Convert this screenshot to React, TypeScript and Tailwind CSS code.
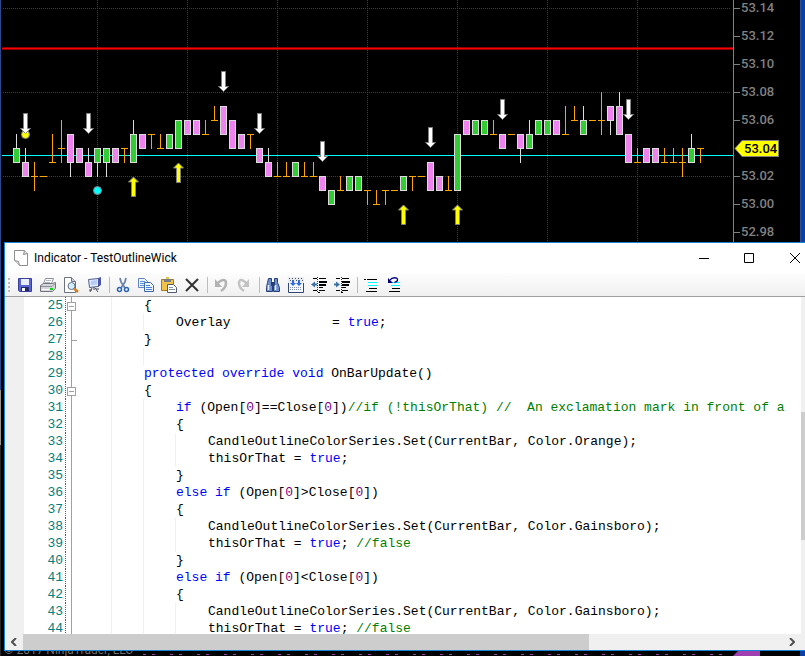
import type { ReactNode } from "react";

type Bar = { kind: "up" | "down" | "flat"; top: number; bottom: number; high?: number; low?: number };

const up = (top: number, bottom: number, high?: number, low?: number): Bar => ({ kind: "up", top, bottom, high, low });
const down = (top: number, bottom: number, high?: number, low?: number): Bar => ({ kind: "down", top, bottom, high, low });
const flat = (at: number, high?: number, low?: number): Bar => ({ kind: "flat", top: at, bottom: at, high, low });

// prices are in ticks above 53.00
const bars: Bar[] = [
  up(4, 3, 5), down(3, 2, 4), flat(2, 3, 1), flat(2), flat(3, 5), flat(4, 6, 3),
  down(5, 3, 5, 2), down(4, 3), down(3, 2, 4), up(4, 3, 4, 2), up(4, 3, 4, 2), down(4, 3),
  flat(4, 4, 3), up(5, 3, 6), down(5, 4), flat(5, 5, 4), flat(4, 5), up(5, 4),
  up(6, 4), down(6, 5), down(6, 5), flat(5, 6), flat(6, 7), down(7, 5),
  down(6, 4), down(5, 4), flat(5, 5, 4), down(4, 3), down(3, 2, 4), flat(2, 3),
  flat(2, 3), up(3, 2), flat(2, 3), flat(2, 3), down(2, 1), up(1, 0),
  flat(1, 2), up(2, 1), up(2, 1), flat(1, 1, 0), flat(0, 1), flat(1, 1, 0),
  flat(1), up(2, 1), flat(2, 2, 1), flat(2), down(3, 1), down(2, 1),
  flat(1, 2), up(5, 1), down(6, 5), up(6, 5), up(6, 5), flat(5, 6),
  down(5, 4), flat(5), down(5, 4, 5, 3), up(5, 4, 6), up(6, 5), up(6, 5),
  down(6, 5), flat(5, 7), flat(6, 7), up(6, 5, 7), flat(6), flat(6, 8, 5),
  down(7, 6, 7, 5), down(7, 5, 8), down(5, 3), flat(3, 4), down(4, 3), down(4, 3),
  flat(3, 4), flat(3, 4), flat(3, 4, 2), up(4, 3, 5), flat(4, 4, 3),
];

const sells = [[25, 113], [88, 113], [223, 71], [259, 113], [322, 141], [430, 127], [502, 99], [628, 99]];
const buys = [[133, 177], [178, 163], [403, 205], [457, 205]];
const prices = ["53.14", "53.12", "53.10", "53.08", "53.06", "53.04", "53.02", "53.00", "52.98"];

const y = (tick: number) => 204 - tick * 14;

function Candle({ bar, x }: { bar: Bar; x: number }) {
  const high = y(bar.high ?? bar.top);
  const low = y(bar.low ?? bar.bottom);
  if (bar.kind === "flat") {
    return (
      <g fill="#ffa500">
        <rect x={x - 3} y={y(bar.top)} width="7" height="1" />
        {high !== low && <rect x={x} y={high} width="1" height={low - high + 1} />}
      </g>
    );
  }
  return (
    <g>
      <rect x={x} y={high} width="1" height={low - high + 1} fill="#dcdcdc" />
      <rect x={x - 3} y={y(bar.top)} width="7" height={y(bar.bottom) - y(bar.top) + 1} fill="#dcdcdc" />
      <rect x={x - 2} y={y(bar.top) + 1} width="5" height={y(bar.bottom) - y(bar.top) - 1} fill={bar.kind === "up" ? "#32cd32" : "#ee82ee"} />
    </g>
  );
}

function Plot() {
  return (
    <svg className="h-full min-w-0 flex-1" shapeRendering="crispEdges" role="img" aria-label="Price chart">
      <g transform="translate(-2 0)">
        <g stroke="#45450f" strokeDasharray="1 1">
          {[8, 92, 176].map((row) => <line key={row} x1="3" x2="100%" y1={row + 0.5} y2={row + 0.5} />)}
          {[97, 187, 277, 367, 457, 547, 637].map((col) => <line key={col} x1={col + 0.5} x2={col + 0.5} y1="0" y2="100%" />)}
        </g>
        <rect x="0" y="47" width="110%" height="3" fill="#900000" />
        <rect x="0" y="48" width="110%" height="1" fill="#ff0000" />
        <rect x="0" y="155" width="110%" height="1" fill="#00ffff" />
        {bars.map((bar, i) => <Candle key={i} bar={bar} x={16 + i * 9} />)}
        <g shapeRendering="auto" stroke="#808080">
          <circle cx="25.5" cy="134.5" r="4" fill="#ffff00" />
          <circle cx="97.5" cy="190.5" r="4" fill="#00ffff" />
          {sells.map(([x, top]) => (
            <path key={x} d={`M${x - 1.5} ${top + 0.5}h4v15h3l-5 5l-5-5h3z`} fill="#ffffff" />
          ))}
          {buys.map(([x, top]) => (
            <path key={x} d={`M${x + 0.5} ${top}l5 5h-3v14.5h-4v-14.5h-3z`} fill="#ffff00" />
          ))}
        </g>
      </g>
    </svg>
  );
}

function PriceAxis() {
  return (
    <div className="w-[67px] shrink-0 border-l border-[#808080] font-['Roboto',sans-serif] text-[13px] font-medium text-[#808080]">
      <div className="-mt-1.5">
        {prices.map((price) =>
          price === "53.04" ? (
            <div key={price} className="flex h-7 items-center">
              <svg width="10" height="17" className="shrink-0">
                <path d="M10 .5H8L1 8.5l7 8h2z" fill="#ffff00" />
                <path d="M10 .5H8L1 8.5l7 8h2" fill="none" stroke="#808080" />
              </svg>
              <span className="h-[17px] w-[35px] border-y border-r border-[#808080] bg-[#ffff00] leading-[15px] text-black">{price}</span>
            </div>
          ) : (
            <div key={price} className="flex h-7 items-center gap-px">
              <span className="h-px w-1.5 bg-[#808080]" />
              <span>{price}</span>
            </div>
          )
        )}
      </div>
    </div>
  );
}

function Tool({ label, children }: { label: string; children: ReactNode }) {
  return (
    <button aria-label={label} className="flex h-6 w-[23px] items-center justify-center">
      <svg width="16" height="16" viewBox="0 0 16 16">{children}</svg>
    </button>
  );
}

const Separator = () => <span className="flex w-1.5 justify-end pr-px"><span className="h-4 w-px bg-[#bdbdbd]" /></span>;

function Toolbar() {
  return (
    <div className="flex h-6 items-center border-b border-[#a0a0a0] bg-linear-to-b from-[#fdfdfd] to-[#f0f0f0] pl-[3px]">
      <svg width="5" height="16" className="shrink-0">
        <path d="M0 1h2v2H0zM0 5h2v2H0zM0 9h2v2H0zM0 13h2v2H0z" fill="#bcbcbc" />
      </svg>
      <Tool label="Save">
        <path d="M1.500 1.500h13v13h-12l-1-1z" fill="#5a66d0" stroke="#3a3f9c" />
        <path d="M4 2h8v6H4z" fill="#e8eefc" />
        <path d="M4 10h8v4H4z" fill="#23276b" />
        <path d="M5 11h3v3H5z" fill="#ffffff" />
      </Tool>
      <Tool label="Print">
        <path d="M5.500 1.500h8l-2 5h-8z" fill="#ffffff" stroke="#8b8f99" />
        <path d="M6 3.500h5M5 5.500h5" stroke="#b0b5c4" />
        <path d="M.5 8.500l3-2h9l3-1v6l-3 3H.5z" fill="#d4d6dc" stroke="#70747e" />
        <path d="M1 9.500h11l3-3" fill="none" stroke="#8b8f99" />
        <path d="M2 12.500h8" stroke="#ffffff" />
        <path d="M10 11h3v2h-3z" fill="#18d018" />
      </Tool>
      <Tool label="Print preview">
        <path d="M1.500 .5h7l4 4v11h-11z" fill="#ffffff" stroke="#6b7280" />
        <path d="M8.500 .5v4h4" fill="#c9d3e6" stroke="#6b7280" />
        <circle cx="8.500" cy="9" r="3.500" fill="#d2efff" stroke="#657085" />
        <path d="M11 11.500l4 3.500" stroke="#d08020" strokeWidth="2.500" />
      </Tool>
      <Tool label="Page setup">
        <path d="M2.500 2.500l10-1v8l-9 1z" fill="#dce8ff" stroke="#56618b" />
        <path d="M5 4l6-1v4l-6 1z" fill="#b5caf5" />
        <path d="M12 1l3-1v8l-3 2z" fill="#4b57a5" />
        <path d="M8 10v3M6 11l-2 4M9 11l3 4M3 13h3M10 12h3" stroke="#454b60" />
      </Tool>
      <Separator />
      <Tool label="Cut">
        <path d="M5 1l1 4 4 6M11 1l-1 4-4 6" fill="none" stroke="#6b84a8" strokeWidth="1.800" />
        <circle cx="4.500" cy="12.500" r="2" fill="none" stroke="#2b63b8" strokeWidth="1.500" />
        <circle cx="11.500" cy="12.500" r="2" fill="none" stroke="#2b63b8" strokeWidth="1.500" />
      </Tool>
      <Tool label="Copy">
        <path d="M.5 1.500h6l3 3v6h-9z" fill="#eef5ff" stroke="#5f83be" />
        <path d="M2 4.500h5M2 6.500h4M2 8.500h4" stroke="#5f91d8" />
        <path d="M6.500 5.500h6l3 3v6h-9z" fill="#eef5ff" stroke="#3d66ad" />
        <path d="M8 8.500h4M8 10.500h6M8 12.500h6" stroke="#4c82d5" />
      </Tool>
      <Tool label="Paste">
        <path d="M.5 2.500h12v11H.5z" fill="#efc34c" stroke="#a77724" />
        <path d="M3 2h7v3H3z" fill="#777b85" />
        <path d="M5 0h3v2H5z" fill="#e5c54a" />
        <path d="M6.500 7.500h6l3 3v5h-9z" fill="#ffffff" stroke="#555a68" />
        <path d="M8 10.500h4M8 12.500h6" stroke="#8090aa" />
      </Tool>
      <Tool label="Delete">
        <path d="M2 2l12 12M14 2L2 14" fill="none" stroke="#333333" strokeWidth="2" />
      </Tool>
      <Separator />
      <Tool label="Undo">
        <path d="M4 7c4-5 9-5 9-1 0 3-2 6-5 8" fill="none" stroke="#b2b2b2" strokeWidth="2.500" />
        <path d="M2 2v8h7z" fill="#b2b2b2" />
      </Tool>
      <Tool label="Redo">
        <path d="M11 7C7 2 3 2 3 6c0 3 2 6 5 8" fill="none" stroke="#c3c3c3" strokeWidth="2.500" />
        <path d="M13 2v8H6z" fill="#c3c3c3" />
      </Tool>
      <Separator />
      <Tool label="Find">
        <path d="M3.500 1.500h3v3l1 2v8h-6v-4l1-5zM9.500 1.500h3v4l2 5v4h-6v-8l1-2z" fill="#6f8fcc" stroke="#263f78" />
        <path d="M6 5h4v4H6z" fill="#263f78" />
        <path d="M3.500 8v5M10.500 8v5" stroke="#e4edff" strokeWidth="1.500" />
      </Tool>
      <Tool label="Bookmark">
        <path d="M0 0h16v16H0z" fill="#e9ebf0" />
        <path d="M1 1.500h14M2 3.500h13" stroke="#555555" strokeDasharray="1 2" />
        <path d="M.5 6v9.500h15V6" fill="#f5f8ff" stroke="#33457b" />
        <path d="M5 3v4M11 3v4" stroke="#2f6be0" strokeWidth="2" />
        <path d="M2 6h6l-3 3zM8 6h6l-3 3z" fill="#2f6be0" />
        <path d="M2 10.500h12M2 12.500h12" stroke="#8391b5" strokeDasharray="1 1" />
      </Tool>
      <Tool label="Outdent">
        <g fill="#000000" shapeRendering="crispEdges">
          <path d="M2 1h4v1H2zM8 1h7v1H8zM8 4h8v2H8zM8 7h7v2H8zM8 10h4v1H8zM2 13h4v1H2zM8 13h6v1H8zM7 15h2v1H7z" />
          <path d="M6.500 0v16" stroke="#333333" strokeDasharray="1 1" />
        </g>
        <path d="M0 7.500l4-3v2h2v2H4v2z" fill="#3e73a8" />
      </Tool>
      <Tool label="Indent">
        <g fill="#000000" shapeRendering="crispEdges">
          <path d="M2 1h4v1H2zM8 1h7v1H8zM8 4h8v2H8zM8 7h7v2H8zM8 10h4v1H8zM2 13h4v1H2zM8 13h6v1H8zM7 15h2v1H7z" />
          <path d="M7.500 0v16" stroke="#333333" strokeDasharray="1 1" />
        </g>
        <path d="M6 7.500l-4-3v2H0v2h2v2z" fill="#3e73a8" />
      </Tool>
      <Separator />
      <Tool label="Comment lines">
        <g shapeRendering="crispEdges">
          <path d="M1 2h2v1H1zM4 2h10v1H4zM6 11h8v1H6zM3 14h11v1H3z" fill="#000000" />
          <path d="M5 5h9v1H5zM5 8h9v1H5z" fill="#00ffff" />
        </g>
      </Tool>
      <Tool label="Uncomment lines">
        <g shapeRendering="crispEdges">
          <path d="M6 11h8v1H6zM3 14h11v1H3z" fill="#000000" />
          <path d="M5 5h9v1H5zM5 8h9v1H5z" fill="#00ffff" />
        </g>
        <path d="M4 3c2-3 8-3 7.500 0 0 1.500-1 2-3 2.500" fill="none" stroke="#000080" strokeWidth="1.300" />
        <path d="M2 1v5h5z" fill="#000080" />
      </Tool>
    </div>
  );
}

const K = ({ children }: { children: ReactNode }) => <span className="text-[#0000ff]">{children}</span>;
const N = ({ children }: { children: ReactNode }) => <span className="text-[#800080]">{children}</span>;
const C = ({ children }: { children: ReactNode }) => <span className="text-[#008000]">{children}</span>;

// depth is the number of tab stops, guides the number of indent rules drawn
type Line = { depth: number; guides: number; fold?: "open" | "end"; code?: ReactNode };

const lines: Line[] = [
  { depth: 2, guides: 1, fold: "open", code: "{" },
  { depth: 3, guides: 2, code: <>{"Overlay             = "}<K>true</K>;</> },
  { depth: 2, guides: 1, fold: "end", code: "}" },
  { depth: 2, guides: 2 },
  { depth: 2, guides: 1, code: <><K>protected override void</K> OnBarUpdate()</> },
  { depth: 2, guides: 1, fold: "open", code: "{" },
  { depth: 3, guides: 2, code: <><K>if</K> (Open[<N>0</N>]==Close[<N>0</N>])<C>{"//if (!thisOrThat) //  An exclamation mark in front of a"}</C></> },
  { depth: 3, guides: 2, code: "{" },
  { depth: 4, guides: 3, code: "CandleOutlineColorSeries.Set(CurrentBar, Color.Orange);" },
  { depth: 4, guides: 3, code: <>thisOrThat = <K>true</K>;</> },
  { depth: 3, guides: 2, code: "}" },
  { depth: 3, guides: 2, code: <><K>else if</K> (Open[<N>0</N>]&gt;Close[<N>0</N>])</> },
  { depth: 3, guides: 2, code: "{" },
  { depth: 4, guides: 3, code: "CandleOutlineColorSeries.Set(CurrentBar, Color.Gainsboro);" },
  { depth: 4, guides: 3, code: <>thisOrThat = <K>true</K>; <C>//false</C></> },
  { depth: 3, guides: 2, code: "}" },
  { depth: 3, guides: 2, code: <><K>else if</K> (Open[<N>0</N>]&lt;Close[<N>0</N>])</> },
  { depth: 3, guides: 2, code: "{" },
  { depth: 4, guides: 3, code: "CandleOutlineColorSeries.Set(CurrentBar, Color.Gainsboro);" },
  { depth: 4, guides: 3, code: <>thisOrThat = <K>true</K>; <C>//false</C></> },
];

function CodeLine({ line, number }: { line: Line; number: number }) {
  return (
    <div className="flex h-[17px] whitespace-pre">
      <span className="w-[42px] shrink-0 border-r border-dotted border-[#008080] pr-0.5 text-right text-[#008080]">{number}</span>
      <svg width="14" height="17" className="shrink-0" shapeRendering="crispEdges">
        <path d="M5.500 0v17" stroke="#a0a0a0" />
        {line.fold === "open" && <path d="M1.500 5.500h8v8h-8zM3 9.500h5" fill="#ffffff" stroke="#a0a0a0" />}
        {line.fold === "end" && <path d="M5 9.500h6" stroke="#a0a0a0" />}
      </svg>
      {Array.from({ length: line.depth }, (_, i) => (
        <span key={i} className={`w-8 shrink-0 border-r ${i < line.guides ? "border-[#f0f0f0]" : "border-transparent"}`} />
      ))}
      <code className="font-['Liberation_Mono',monospace]">{line.code}</code>
    </div>
  );
}

function Editor() {
  return (
    <section className="flex min-h-0 flex-1 flex-col border-y border-l border-[#1883d7] bg-white">
      <header className="flex h-[30px] shrink-0 items-center pl-[9px]">
        <svg width="15" height="16" className="mr-[5px] shrink-0">
          <path d="M.5 .5h10l3 3v12h-8l-5-5z" fill="#ffffff" stroke="#8c8c8c" />
          <path d="M10.500 .5l-1 4 4-1M.5 10.500l4 1 1 4" fill="#e4e4e4" stroke="#8c8c8c" />
        </svg>
        <h1 className="font-['Roboto',sans-serif] text-[12px] text-black">Indicator - TestOutlineWick</h1>
        <div className="ml-auto flex">
          <button aria-label="Minimize" className="flex h-7 w-11 items-center justify-center">
            <svg width="10" height="10"><path d="M0 5.500h10" stroke="#000000" /></svg>
          </button>
          <button aria-label="Maximize" className="flex h-7 w-[46px] items-center justify-center">
            <svg width="10" height="10"><path d="M.5 .5h9v9h-9z" fill="none" stroke="#000000" /></svg>
          </button>
          <button aria-label="Close" className="flex h-7 w-[33px] items-center justify-end pr-[5px]">
            <svg width="10" height="10"><path d="M0 0l10 10M10 0L0 10" stroke="#000000" /></svg>
          </button>
        </div>
      </header>
      <Toolbar />
      <div className="flex min-h-0 flex-1">
        <div className="w-[19px] shrink-0 bg-[#f0f0f0]" />
        <div className="min-w-0 flex-1 overflow-hidden font-['Liberation_Mono',monospace] text-[13px] leading-[17px] text-black">
          {lines.map((line, i) => <CodeLine key={i} line={line} number={25 + i} />)}
        </div>
        <div className="flex w-1 shrink-0 flex-col bg-[#f0f0f0] pt-[115px]">
          <div className="h-32 bg-[#cdcdcd]" />
        </div>
      </div>
      <div className="flex h-4 shrink-0 bg-[#f0f0f0]">
        <button aria-label="Scroll left" className="flex w-[18px] items-center justify-center">
          <svg width="6" height="8"><path d="M5 0L1 4l4 4" fill="none" stroke="#505050" strokeWidth="2" /></svg>
        </button>
        <div className="flex-1">
          <div className="h-full w-3/4 bg-[#cdcdcd]" />
        </div>
        <button aria-label="Scroll right" className="flex w-[27px] items-center justify-center">
          <svg width="6" height="8"><path d="M1 0l4 4-4 4" fill="none" stroke="#505050" strokeWidth="2" /></svg>
        </button>
      </div>
    </section>
  );
}

export default function App() {
  return (
    <div className="flex h-screen overflow-hidden bg-black">
      <div className="flex w-px shrink-0 flex-col">
        <div className="h-[390px] bg-[#284a8c]" />
        <div className="h-[55px] bg-[#9a968c]" />
        <div className="flex-1 bg-[#262626]" />
      </div>
      <main className="flex min-w-0 flex-1 flex-col pl-px">
        <div className="flex h-[242px] shrink-0 overflow-hidden">
          <Plot />
          <PriceAxis />
          <div className="w-[5px] border-l border-[#28509c] bg-[#0840a8]" />
        </div>
        <div className="flex min-h-0 flex-1 pl-0.5">
          <Editor />
        </div>
        <footer className="flex h-[5px] shrink-0 items-end overflow-hidden pl-0.5 font-['Roboto',sans-serif] text-[12px] leading-3 text-[#707070]">
          <span>© 2017 NinjaTrader, LLC</span>
          <svg height="5" className="min-w-0 flex-1">
            <path d="M10 3.500h590" stroke="#a040b0" strokeDasharray="3 6 3 15" />
          </svg>
          <svg width="27" height="5"><path d="M0 5l5-5h22v5z" fill="#a040b0" /></svg>
          <span className="ml-10 h-full w-[5px] bg-[#0840a8]" />
        </footer>
      </main>
    </div>
  );
}
